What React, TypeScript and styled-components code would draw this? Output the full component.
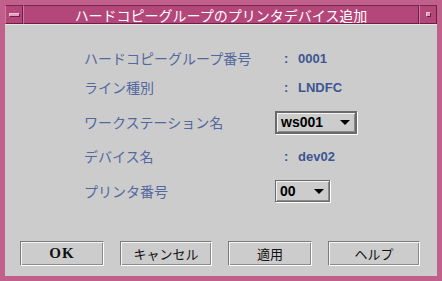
import React from 'react';
import styled, { createGlobalStyle } from 'styled-components';

const GlobalStyle = createGlobalStyle`
  html, body {
    margin: 0;
    padding: 0;
    background: #cccccc;
  }
  * {
    box-sizing: border-box;
  }
`;

const Frame = styled.div`
  width: 442px;
  height: 281px;
  display: flex;
  flex-direction: column;
  background: #c2608c;
  border: 5px solid #c2608c;
  box-shadow: inset 1px 1px 0 #e49cbc, inset -1px -1px 0 #5a1838, inset -2px -2px 0 #7a2a52;
  font-family: 'Noto Sans CJK JP', 'Noto Sans', sans-serif;
`;

const TitleBar = styled.div`
  display: flex;
  height: 19px;
  background: #b4477a;
`;

const TitleButton = styled.div`
  width: 18px;
  display: flex;
  align-items: center;
  justify-content: center;
  border-top: 1px solid #7a2652;
  border-left: 1px solid #d27aa2;
  border-right: 1px solid #6e1e48;
  border-bottom: 1px solid #6e1e48;
`;

const MenuGlyph = styled.div`
  width: 11px;
  height: 4px;
  background: #e0a0bc;
  border: 1px solid #6e1e48;
  border-top-color: #f0c0d4;
  border-left-color: #f0c0d4;
`;

const MaxGlyph = styled.div`
  width: 5px;
  height: 5px;
  background: #e0a0bc;
  border: 1px solid #6e1e48;
  border-top-color: #f0c0d4;
  border-left-color: #f0c0d4;
`;

const Title = styled.div`
  flex: 1;
  display: flex;
  align-items: center;
  justify-content: center;
  color: #ffffff;
  font-size: 14px;
  line-height: 1;
  border-top: 1px solid #7a2652;
  border-left: 1px solid #d27aa2;
  border-right: 1px solid #6e1e48;
  border-bottom: 1px solid #6e1e48;
  white-space: nowrap;
`;

const Content = styled.div`
  flex: 1;
  display: flex;
  flex-direction: column;
  background: #cccccc;
  border-top: 1px solid #e4e4e4;
  padding: 19px 0 10px 15px;
`;

const Form = styled.div`
  display: flex;
  flex-direction: column;
  padding-left: 64px;
`;

const Row = styled.div<{ $h: number }>`
  display: grid;
  grid-template-columns: 191px auto;
  align-items: center;
  height: ${p => p.$h}px;
`;

const Label = styled.span`
  color: #5468a0;
  font-size: 14px;
  white-space: nowrap;
`;

const Value = styled.span`
  display: flex;
  align-items: center;
  color: #3d5592;
  font-family: 'Liberation Sans', Arial, sans-serif;
  font-weight: bold;
  font-size: 13px;
`;

const Colon = styled.span`
  width: 23px;
  padding-left: 9px;
`;

const Select = styled.div<{ $w: number; $focus?: boolean }>`
  width: ${p => p.$w}px;
  height: ${p => (p.$focus ? 23 : 22)}px;
  display: flex;
  align-items: center;
  justify-content: space-between;
  padding: 0 5px 0 4px;
  background: #cccccc;
  border: ${p => (p.$focus ? 2 : 1)}px solid #6a6a6a;
  box-shadow: 1px 1px 0 #ffffff, inset 1px 1px 0 #f4f4f4, inset -1px -1px 0 #8a8a8a;
  color: #000;
  font-family: 'Liberation Sans', Arial, sans-serif;
  font-weight: bold;
  font-size: 14px;
`;

const Arrow = styled.span`
  width: 0;
  height: 0;
  border-left: 5px solid transparent;
  border-right: 5px solid transparent;
  border-top: 5px solid #000;
  margin-top: 1px;
`;

const ButtonRow = styled.div`
  display: flex;
  gap: 16px;
  margin-top: auto;
`;

const Button = styled.button<{ $w: number; $serif?: boolean }>`
  width: ${p => p.$w}px;
  height: 25px;
  display: flex;
  align-items: center;
  justify-content: center;
  padding: 0;
  background: #cccccc;
  border: 1px solid;
  border-color: #7c7c7c #ffffff #ffffff #7c7c7c;
  box-shadow: inset 1px 1px 0 #f4f4f4, inset -1px -1px 0 #8c8c8c;
  color: #111;
  font-family: ${p =>
    p.$serif ? "'Liberation Serif', 'Times New Roman', serif" : "'Noto Sans CJK JP', sans-serif"};
  font-weight: ${p => (p.$serif ? 'bold' : 'normal')};
  font-size: ${p => (p.$serif ? 15 : 13)}px;
  letter-spacing: ${p => (p.$serif ? '1px' : '0')};
  cursor: pointer;
`;

export default function App() {
  return (
    <>
      <GlobalStyle />
      <Frame>
        <TitleBar>
          <TitleButton>
            <MenuGlyph />
          </TitleButton>
          <Title>ハードコピーグループのプリンタデバイス追加</Title>
          <TitleButton>
            <MaxGlyph />
          </TitleButton>
        </TitleBar>
        <Content>
          <Form>
            <Row $h={28}>
              <Label>ハードコピーグループ番号</Label>
              <Value>
                <Colon>:</Colon>0001
              </Value>
            </Row>
            <Row $h={30}>
              <Label>ライン種別</Label>
              <Value>
                <Colon>:</Colon>LNDFC
              </Value>
            </Row>
            <Row $h={40}>
              <Label>ワークステーション名</Label>
              <Select $w={82} $focus>
                ws001
                <Arrow />
              </Select>
            </Row>
            <Row $h={28}>
              <Label>デバイス名</Label>
              <Value>
                <Colon>:</Colon>dev02
              </Value>
            </Row>
            <Row $h={42}>
              <Label>プリンタ番号</Label>
              <Select $w={55}>
                00
                <Arrow />
              </Select>
            </Row>
          </Form>
          <ButtonRow>
            <Button $w={84} $serif>OK</Button>
            <Button $w={92}>キャンセル</Button>
            <Button $w={84}>適用</Button>
            <Button $w={92}>ヘルプ</Button>
          </ButtonRow>
        </Content>
      </Frame>
    </>
  );
}
